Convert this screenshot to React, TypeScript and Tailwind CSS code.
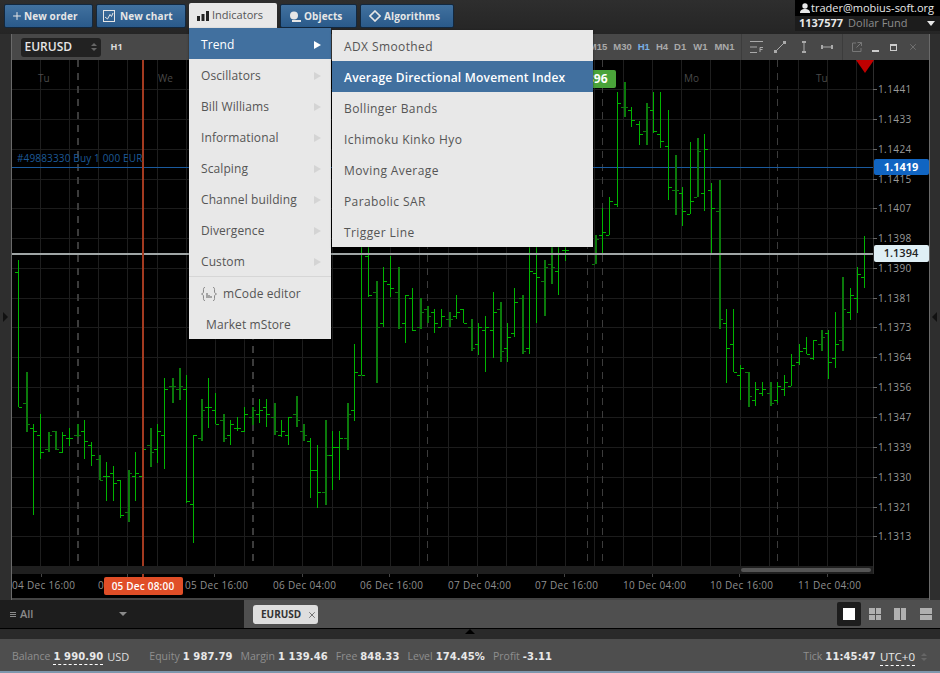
import { Plus, X } from "lucide-react";
import type { ReactNode } from "react";

// x, high, low, open (left tick), close (right tick), thick dark bar
type Bar = [number, number, number, number, number, number?];

const bars: Bar[] = [
  [18, 260, 407, 272, 407], [26, 372, 432, 403, 424, 1], [33, 424, 515, 428, 431], [40, 414, 459, 435, 452],
  [48, 432, 452, 449, 435, 1], [55, 431, 450, 431, 449, 1], [62, 432, 453, 452, 435], [69, 428, 446, 438, 438],
  [77, 424, 437, 435, 435, 1], [84, 420, 459, 431, 441], [91, 442, 466, 445, 455], [99, 455, 480, 459, 480, 1],
  [106, 462, 501, 476, 476], [113, 466, 501, 473, 483], [120, 480, 518, 480, 515], [128, 470, 522, 512, 473, 1],
  [135, 452, 501, 476, 473], [142, 428, 505, 476, 449], [150, 428, 467, 445, 452, 1], [157, 424, 463, 449, 431],
  [164, 378, 469, 435, 389], [172, 378, 403, 386, 386, 1], [179, 368, 400, 389, 386, 1], [186, 375, 503, 389, 501],
  [193, 435, 543, 504, 435], [201, 399, 441, 438, 410, 1], [208, 378, 428, 407, 407], [215, 393, 424, 410, 424],
  [223, 414, 442, 420, 438, 1], [230, 420, 445, 435, 424], [237, 417, 431, 428, 428], [244, 407, 432, 431, 414],
  [252, 407, 425, 417, 410, 1], [259, 399, 423, 414, 410], [266, 399, 427, 407, 414], [274, 403, 435, 417, 431, 1],
  [281, 420, 437, 435, 431], [288, 417, 445, 435, 417], [296, 396, 427, 414, 420, 1], [303, 424, 441, 431, 435, 1],
  [310, 438, 498, 441, 470], [317, 445, 508, 470, 492], [325, 420, 505, 492, 455, 1], [332, 431, 490, 455, 447],
  [339, 431, 480, 447, 438], [347, 403, 450, 438, 414, 1], [354, 344, 421, 410, 372], [361, 240, 375, 375, 375],
  [368, 240, 297, 256, 295], [376, 281, 383, 292, 327, 1], [383, 267, 327, 323, 281], [390, 256, 297, 284, 288],
  [398, 267, 329, 292, 327, 1], [405, 295, 343, 323, 295], [412, 288, 331, 298, 330], [420, 298, 329, 327, 312, 1],
  [427, 306, 323, 309, 316, 1], [434, 309, 333, 312, 323], [441, 309, 327, 327, 316], [449, 312, 327, 319, 319, 1],
  [456, 295, 319, 316, 312], [463, 309, 323, 309, 323], [471, 319, 351, 327, 348, 1], [478, 323, 355, 344, 327],
  [485, 316, 372, 330, 327], [493, 292, 358, 330, 312], [500, 302, 362, 309, 351, 1], [507, 323, 362, 348, 337],
  [514, 288, 337, 333, 302], [522, 295, 354, 298, 351, 1], [529, 240, 354, 348, 271], [536, 240, 323, 273, 277],
  [544, 260, 316, 281, 267, 1], [551, 240, 284, 264, 267, 1], [558, 240, 295, 271, 253], [565, 240, 261, 250, 250],
  [595, 235, 264, 264, 239, 1], [602, 208, 254, 235, 232], [609, 197, 235, 235, 201], [617, 92, 207, 204, 103],
  [624, 82, 117, 107, 107, 1], [631, 107, 127, 110, 120], [639, 121, 145, 124, 134], [646, 103, 145, 131, 107, 1],
  [653, 92, 133, 110, 131], [660, 92, 148, 134, 141], [668, 110, 200, 146, 187], [675, 155, 215, 190, 190, 1],
  [682, 187, 226, 193, 211], [690, 142, 214, 214, 201], [697, 138, 197, 197, 151, 1], [704, 134, 211, 193, 149],
  [711, 183, 254, 190, 208], [719, 180, 329, 211, 319, 1], [726, 309, 383, 323, 348], [733, 309, 372, 344, 372],
  [740, 365, 400, 375, 368], [748, 372, 407, 372, 396, 1], [755, 382, 406, 400, 389], [762, 382, 396, 393, 389],
  [770, 382, 406, 393, 403, 1], [777, 382, 403, 400, 386], [784, 375, 396, 389, 382], [791, 354, 386, 386, 365],
  [799, 344, 365, 362, 351], [806, 337, 354, 348, 354], [813, 340, 360, 358, 340], [821, 330, 351, 344, 337, 1],
  [828, 330, 379, 333, 362], [835, 312, 368, 358, 344], [842, 277, 351, 340, 309, 1], [850, 288, 320, 312, 295],
  [857, 267, 313, 298, 274], [864, 236, 288, 277, 253],
];

const prices = [
  ["1.1441", 89], ["1.1433", 119], ["1.1424", 149], ["1.1415", 179], ["1.1407", 208], ["1.1398", 238],
  ["1.1390", 268], ["1.1381", 298], ["1.1373", 327], ["1.1364", 357], ["1.1356", 387], ["1.1347", 417],
  ["1.1339", 447], ["1.1330", 477], ["1.1321", 507], ["1.1313", 536],
] as const;

const times = [
  ["04 Dec 16:00", 12], ["05 Dec 04:00", 98], ["05 Dec 16:00", 185], ["06 Dec 04:00", 273], ["06 Dec 16:00", 360],
  ["07 Dec 04:00", 448], ["07 Dec 16:00", 535], ["10 Dec 04:00", 623], ["10 Dec 16:00", 710], ["11 Dec 04:00", 798],
] as const;

const gridX = Array.from({ length: 29 }, (_, i) => 40.5 + Math.round(i * 29.15));

function ToolButton(props: { icon: ReactNode; label: string; className: string }) {
  return (
    <button
      type="button"
      className={`flex h-[24px] items-center rounded-[2px] border border-[#12283f] bg-gradient-to-b from-[#41719f] to-[#2a5a8a] text-[10px] font-bold tracking-[0.1px] text-[#e6e6e6] ${props.className}`}
    >
      {props.icon}
      {props.label}
    </button>
  );
}

function TopBar() {
  return (
    <div className="flex h-[34px] bg-gradient-to-b from-[#2e2e2e] to-[#252525]">
      <div className="flex flex-1 items-start gap-[3px] pl-[4px] pt-[4px]">
        <ToolButton
          className="w-[89px] gap-[1px] pl-[6px]"
          label="New order"
          icon={<Plus className="size-[12px]" strokeWidth={2} />}
        />
        <ToolButton
          className="w-[90px] gap-[5px] pl-[6px]"
          label="New chart"
          icon={
            <svg viewBox="0 0 12 12" className="size-[12px]" fill="none" stroke="currentColor">
              <rect x="0.5" y="0.5" width="11" height="11" />
              <path d="M2 7l2.5 2L7 4.5l1.500 2L10 3" />
            </svg>
          }
        />
        <div className="-mt-[1px] flex h-[25px] w-[88px] items-center gap-[3px] rounded-t-[2px] bg-[#e8e8e8] pl-[8px] text-[11px] text-[#555]">
          <svg viewBox="0 0 12 10" className="h-[10px] w-[12px]" fill="#222">
            <rect x="0" y="5" width="3" height="5" />
            <rect x="4.500" y="3" width="3" height="7" />
            <rect x="9" y="0" width="3" height="10" />
          </svg>
          Indicators
        </div>
        <ToolButton
          className="w-[77px] gap-[3px] pl-[8px]"
          label="Objects"
          icon={
            <svg viewBox="0 0 12 11" className="h-[11px] w-[12px]" fill="currentColor">
              <circle cx="5" cy="4.500" r="4" />
              <path d="M3 9h9v2H3z" />
            </svg>
          }
        />
        <ToolButton
          className="w-[94px] gap-[3px] pl-[8px]"
          label="Algorithms"
          icon={
            <svg viewBox="0 0 12 12" className="size-[12px]" fill="none" stroke="currentColor" strokeWidth="1.600">
              <path d="M6 1l5 5-5 5-5-5z" />
            </svg>
          }
        />
      </div>
      <div className="flex h-[31px] w-[145px] flex-col bg-black text-[11px] text-[#e8e8e8]">
        <div className="flex h-[16px] items-center gap-[1px] bg-black pl-[5px] text-[11px] whitespace-nowrap">
          <svg viewBox="0 0 10 10" className="size-[10px]" fill="currentColor">
            <circle cx="5" cy="3" r="2.700" />
            <path d="M0 10c0-3 2-4 5-4s5 1 5 4z" />
          </svg>
          trader@mobius-soft.org
        </div>
        <div className="flex h-[15px] items-center bg-[#1c1c1c] pl-[4px] pr-[5px]">
          <span className="font-bold">1137577</span>
          <span className="ml-[5px] flex-1 text-[#8c8c8c]">Dollar Fund</span>
          <span className="h-0 w-0 border-x-[4px] border-t-[5px] border-x-transparent border-t-[#e8e8e8]" />
        </div>
      </div>
    </div>
  );
}

function TitleBar() {
  return (
    <div className="flex h-[26px] items-center bg-[#484848] text-[#aaa]">
      <div className="ml-[9px] flex h-[19px] w-[80px] items-center justify-between rounded-[3px] bg-[#222] pl-[4px] pr-[4px] text-[12px] font-semibold text-[#e6e6e6]">
        EURUSD
        <span className="flex flex-col gap-[2px]">
          <span className="h-0 w-0 border-x-[3px] border-b-[3px] border-x-transparent border-b-[#666]" />
          <span className="h-0 w-0 border-x-[3px] border-t-[3px] border-x-transparent border-t-[#666]" />
        </span>
      </div>
      <span className="ml-[10px] text-[9px] font-bold text-[#ddd]">H1</span>
      <div className="ml-auto flex h-full items-center font-['Liberation_Sans',sans-serif] text-[9.500px] font-bold">
        <span className="mr-[6px]">M15</span>
        <span className="mr-[6px]">M30</span>
        <span className="mr-[6px] text-[#7ab0e6]">H1</span>
        <span className="mr-[6px]">H4</span>
        <span className="mr-[7px]">D1</span>
        <span className="mr-[7px]">W1</span>
        <span className="mr-[6px]">MN1</span>
      </div>
      <div className="flex h-full items-center gap-[11px] border-l border-[#3c3c3c] pl-[8px] pr-[9px]">
        <svg viewBox="0 0 13 12" className="h-[12px] w-[13px]" fill="none" stroke="#aaa">
          <path d="M0 .5h13M0 6h7M0 11.500h7M10 11V6.500h3M10 8.500h2.500" />
        </svg>
        <svg viewBox="0 0 12 12" className="size-[12px]" fill="none" stroke="#aaa">
          <path d="M2 10l8-8" />
          <rect x="0" y="9" width="3" height="3" fill="#aaa" stroke="none" />
          <rect x="9" y="0" width="3" height="3" fill="#aaa" stroke="none" />
        </svg>
        <svg viewBox="0 0 6 12" className="ml-[4px] h-[12px] w-[6px]" fill="none" stroke="#aaa">
          <path d="M3 1v10" />
          <rect x="1" y="0" width="4" height="2" fill="#aaa" stroke="none" />
          <rect x="1" y="10" width="4" height="2" fill="#aaa" stroke="none" />
        </svg>
        <svg viewBox="0 0 12 6" className="ml-[3px] h-[6px] w-[12px]" fill="none" stroke="#aaa">
          <path d="M1 3h10" />
          <rect x="0" y="1" width="2" height="4" fill="#aaa" stroke="none" />
          <rect x="10" y="1" width="2" height="4" fill="#aaa" stroke="none" />
        </svg>
      </div>
      <div className="flex h-full items-center gap-[10px] border-l border-[#3c3c3c] pl-[9px] pr-[11px]">
        <svg viewBox="0 0 10 10" className="size-[10px]" fill="none" stroke="#777">
          <path d="M4 1H.5v8.500H9V6M5.500.5h4V4M9.500.5L4.500 5.500" />
        </svg>
        <span className="mt-[7px] h-[2px] w-[7px] bg-[#ccc]" />
        <span className="ml-[1px] h-[7px] w-[7px] border border-t-2 border-[#ccc]" />
        <X className="ml-[1px] size-[10px] text-[#888]" strokeWidth={1.500} />
      </div>
    </div>
  );
}

function ChartSvg() {
  return (
    <svg viewBox="12 60 917 538" className="block h-[538px] w-[917px]" shapeRendering="crispEdges">
      {prices.map(([, y]) => (
        <path key={y} d={`M12 ${y + 0.5}H873`} stroke="#1c1c1c" />
      ))}
      {gridX.map((x) => (
        <path key={x} d={`M${x} 60V566`} stroke="#1e1e1e" />
      ))}
      {[77.5, 252.5, 427.5, 587.5, 602.5, 777.5].map((x) => (
        <path key={x} d={`M${x} 60V566`} stroke="#3c3c3c" strokeWidth={x === 77.5 || x === 252.5 ? 2 : 1} strokeDasharray="7 6" />
      ))}
      <path d="M12 167.500H873" stroke="#1a5a9e" />
      {bars.map(([x, hi, lo, open, close, dark]) => (
        <g key={x} stroke={dark ? "#0b7a0b" : "#00b400"}>
          <path d={`M${x + 0.5} ${hi}V${lo}`} strokeWidth={dark ? 2 : 1} />
          <path d={`M${x - 3} ${open + 0.5}H${x}M${x + 1} ${close + 0.5}H${x + 4}`} />
        </g>
      ))}
      <path d="M12 254H873" stroke="#a0a6a6" strokeWidth="2" />
      <path d="M143 60V578" stroke="#a33a20" strokeWidth="2" />
      <path d="M873.500 60V574" stroke="#2e2e2e" />
      <rect x="12" y="566" width="861" height="8" fill="#1f1f1f" />
      <rect x="741" y="568" width="130" height="4" rx="2" fill="#555" shapeRendering="auto" />
      {[38, 158, 684, 816].map((x, i) => (
        <text key={x} x={x} y="82" shapeRendering="auto" className="fill-[#4a4a4a] text-[10px]">
          {["Tu", "We", "Mo", "Tu"][i]}
        </text>
      ))}
      <text x="17" y="162" className="fill-[#1d5a98] text-[10px] tracking-[0.15px]">
        #49883330 Buy 1 000 EUR
      </text>
      {prices.map(([label, y]) => (
        <g key={label}>
          <path d={`M873 ${y + 0.5}H877`} stroke="#666" />
          <text x="878" y={y + 4} className="fill-[#9a9a9a] text-[10px] tracking-[0.4px]">
            {label}
          </text>
        </g>
      ))}
      {times.map(([label, x]) => (
        <g key={label}>
          <path d={`M${x + 29.5} 574V577`} stroke="#444" />
          <text x={x} y="589" className="fill-[#8f8f8f] text-[10px] tracking-[0.3px]">
            {label}
          </text>
        </g>
      ))}
      <path d="M856 60h18l-9 13z" fill="#c00000" shapeRendering="auto" />
    </svg>
  );
}

function ChartWindow() {
  return (
    <div className="flex w-[919px] flex-col border-x border-[#6a6a6a]">
      <TitleBar />
      <div className="relative h-[538px] overflow-hidden bg-black">
        <ChartSvg />
        <span className="absolute left-[548px] top-[10px] flex h-[18px] w-[56px] items-center justify-end rounded-[2px] bg-[#4aa33a] pr-[8px] text-[12px] font-bold text-white">
          1.1396
        </span>
        <span className="absolute left-[862px] top-[99px] flex h-[16px] w-[55px] items-center justify-center rounded-[2px] bg-[#1165c2] text-[11px] font-bold text-white">
          1.1419
        </span>
        <span className="absolute left-[862px] top-[185px] flex h-[17px] w-[55px] items-center justify-center rounded-[2px] bg-[#dfeff5] text-[11px] font-semibold text-[#222]">
          1.1394
        </span>
        <span className="absolute left-[92px] top-[517px] flex h-[18px] w-[79px] items-center justify-center rounded-[2px] bg-[#e04e27] text-[10px] font-semibold tracking-[0.2px] text-white">
          05 Dec 08:00
        </span>
      </div>
      <div className="h-[2px] bg-[#444]" />
    </div>
  );
}

function SideStrip(props: { side: "left" | "right" }) {
  return (
    <div className="flex flex-1 items-center justify-center bg-[#2e2e2e]">
      {props.side === "left" ? (
        <span className="h-0 w-0 border-y-[5px] border-l-[5px] border-y-transparent border-l-[#111]" />
      ) : (
        <span className="h-0 w-0 border-y-[5px] border-r-[5px] border-y-transparent border-r-[#111]" />
      )}
    </div>
  );
}

function TabBar() {
  return (
    <div className="flex h-[28px] bg-[#4f4f4f]">
      <div className="flex w-[244px] items-center bg-[#1d1d1d] pl-[10px] pr-[117px] text-[11px] font-semibold text-[#8a8a8a]">
        <span className="mr-[4px] flex flex-col gap-[1px]">
          <span className="h-[1px] w-[6px] bg-[#8a8a8a]" />
          <span className="h-[1px] w-[6px] bg-[#8a8a8a]" />
          <span className="h-[1px] w-[6px] bg-[#8a8a8a]" />
        </span>
        All
        <span className="ml-auto h-0 w-0 border-x-[4px] border-t-[4px] border-x-transparent border-t-[#8a8a8a]" />
      </div>
      <div className="ml-[9px] mt-[5px] flex h-[19px] w-[65px] items-center gap-[6px] rounded-[3px] bg-[#dedede] pl-[8px] text-[10px] font-bold text-[#333]">
        EURUSD
        <X className="size-[10px]" strokeWidth={1.500} />
      </div>
      <div className="ml-auto flex items-center gap-[13px] pr-[8px]">
        <div className="-mr-[5px] flex size-[24px] items-center justify-center rounded-[2px] bg-[#1d1d1d]">
          <span className="size-[12px] bg-white" />
        </div>
        <div className="grid size-[12px] grid-cols-2 gap-[1px]">
          <span className="bg-[#b0b0b0]" />
          <span className="bg-[#b0b0b0]" />
          <span className="bg-[#b0b0b0]" />
          <span className="bg-[#b0b0b0]" />
        </div>
        <div className="grid size-[12px] grid-cols-2 gap-[1px]">
          <span className="bg-[#b0b0b0]" />
          <span className="bg-[#b0b0b0]" />
        </div>
        <div className="ml-[1px] grid size-[12px] grid-rows-2 gap-[1px]">
          <span className="bg-[#b0b0b0]" />
          <span className="bg-[#b0b0b0]" />
        </div>
      </div>
    </div>
  );
}

function Stat(props: { label: string; value: string }) {
  return (
    <span className="flex items-baseline gap-[3px]">
      <span className="text-[#8f8f8f]">{props.label}</span>
      <span className="font-['DejaVu_Sans',sans-serif] text-[10px] font-bold tracking-[0.1px] text-[#e8e8e8]">{props.value}</span>
    </span>
  );
}

function StatusBar() {
  return (
    <div className="flex h-[32px] items-center gap-[8px] bg-[#4e4e4e] pl-[12px] pr-[13px] pt-[4px] text-[10.500px]">
      <span className="flex items-baseline gap-[3px]">
        <span className="text-[#8f8f8f]">Balance</span>
        <span className="border-b border-dashed border-white font-['DejaVu_Sans',sans-serif] text-[10px] font-bold tracking-[0.1px] text-[#e8e8e8]">
          1 990.90
        </span>
      </span>
      <span className="-ml-[4px] mr-[12px] text-[11px] text-[#ddd]">USD</span>
      <Stat label="Equity" value="1 987.79" />
      <Stat label="Margin" value="1 139.46" />
      <Stat label="Free" value="848.33" />
      <Stat label="Level" value="174.45%" />
      <Stat label="Profit" value="-3.11" />
      <span className="ml-auto flex items-center gap-[4px]">
        <Stat label="Tick" value="11:45:47" />
        <span className="border-b border-dashed border-white text-[11.500px] text-[#e8e8e8]">UTC+0</span>
        <span className="ml-[2px] flex flex-col gap-[2px]">
          <span className="h-0 w-0 border-x-[3px] border-b-[3px] border-x-transparent border-b-[#666]" />
          <span className="h-0 w-0 border-x-[3px] border-t-[3px] border-x-transparent border-t-[#666]" />
        </span>
      </span>
    </div>
  );
}

function MenuRow(props: { label: string; active?: boolean; arrow?: boolean }) {
  return (
    <div
      className={`flex h-[31px] items-center justify-between pl-[12px] pr-[10px] pt-[2px] ${
        props.active ? "bg-[#41709f] text-white" : "text-[#555]"
      }`}
    >
      {props.label}
      {props.arrow && (
        <span
          className={`h-0 w-0 border-y-[4px] border-l-[7px] border-y-transparent ${
            props.active ? "border-l-white" : "border-l-[#d4d4d4]"
          }`}
        />
      )}
    </div>
  );
}

function IndicatorMenus() {
  const groups = ["Oscillators", "Bill Williams", "Informational", "Scalping", "Channel building", "Divergence", "Custom"];
  const trend = ["Bollinger Bands", "Ichimoku Kinko Hyo", "Moving Average", "Parabolic SAR", "Trigger Line"];
  return (
    <>
      <div className="absolute left-[189px] top-[28px] w-[142px] bg-[#e8e8e8] text-[12px] tracking-[0.1px] shadow-[0_1px_2px_#0008]">
        <MenuRow label="Trend" active arrow />
        {groups.map((g) => (
          <MenuRow key={g} label={g} arrow />
        ))}
        <div className="border-t border-[#d6d6d6]">
          <div className="flex h-[31px] items-center gap-[6px] pl-[12px] pt-[2px] text-[#555]">
            <svg viewBox="0 0 16 14" className="h-[14px] w-[16px]" fill="none" stroke="#888">
              <path d="M4 .5C2 .5 2.500 2 2.500 4S2 6.500 .5 7c1.500.5 2 1 2 3s-.5 3.500 1.500 3.500M12 .5c2 0 1.500 1.500 1.500 3.500s.5 2.500 2 3c-1.500.5-2 1-2 3s.5 3.500-1.500 3.500" />
              <path d="M6 6v5M8 8v3M10 9v2" strokeWidth="1.400" />
            </svg>
            mCode editor
          </div>
          <div className="flex h-[31px] items-center pl-[17px] pt-[2px] text-[#555]">Market mStore</div>
        </div>
      </div>
      <div className="absolute left-[332px] top-[30px] w-[261px] bg-[#e8e8e8] text-[12px] tracking-[0.4px] shadow-[0_1px_2px_#0008]">
        <MenuRow label="ADX Smoothed" />
        <div className="flex h-[31px] items-center bg-[#41709f] pl-[12px] pt-[2px] font-semibold tracking-[0.2px] text-white">
          Average Directional Movement Index
        </div>
        {trend.map((t) => (
          <MenuRow key={t} label={t} />
        ))}
      </div>
    </>
  );
}

export default function App() {
  return (
    <div className="relative flex h-[673px] w-[940px] flex-col overflow-hidden bg-[#2a2a2a] font-['Open_Sans',sans-serif]">
      <TopBar />
      <div className="flex h-[566px]">
        <SideStrip side="left" />
        <ChartWindow />
        <SideStrip side="right" />
      </div>
      <TabBar />
      <div className="flex h-[11px] justify-center border-t border-black bg-[#2a2a2a]">
        <span className="h-0 w-0 border-x-[5px] border-b-[5px] border-x-transparent border-b-black" />
      </div>
      <StatusBar />
      <div className="h-[2px] bg-[#7d97ad]" />
      <IndicatorMenus />
    </div>
  );
}
